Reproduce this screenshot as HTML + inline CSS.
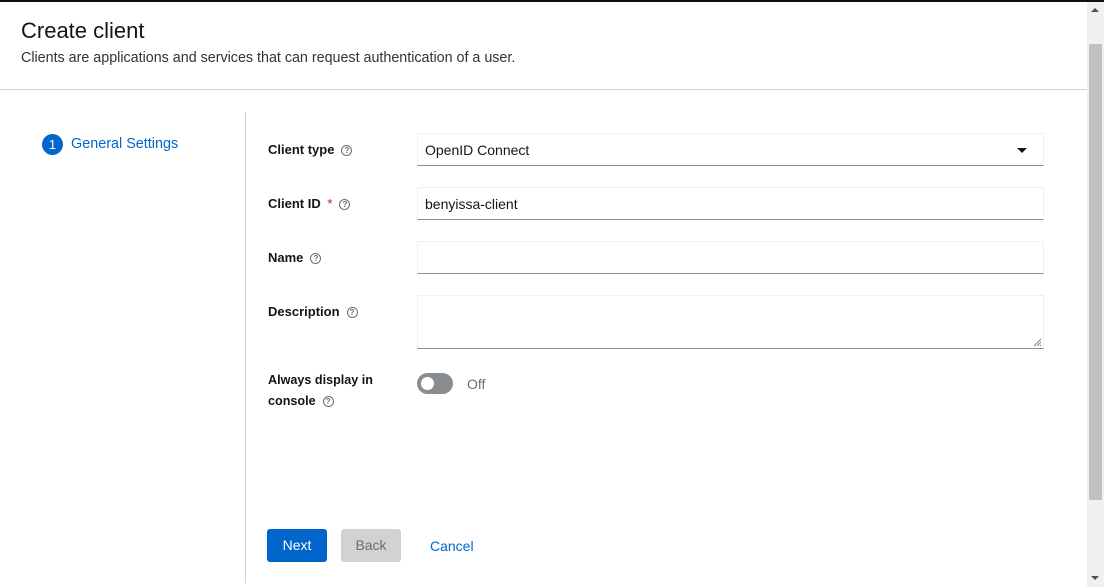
<!DOCTYPE html>
<html><head><style>
*{margin:0;padding:0;box-sizing:border-box}
body{width:1104px;height:587px;overflow:hidden;background:#fff;font-family:"Liberation Sans",sans-serif;position:relative;color:#151515}
.a{position:absolute}
.lbl{position:absolute;left:268px;font-size:13px;font-weight:bold;color:#151515}
.inp{position:absolute;left:417px;width:627px;border:1px solid #f0f0f0;border-bottom:1px solid #8a8d90;font-size:14px;padding-left:7px}
.h{display:inline-block;width:11px;height:11px;border:1.2px solid #6a6e73;border-radius:50%;font-size:8px;line-height:9px;text-align:center;color:#6a6e73;font-weight:bold;vertical-align:1px;margin-left:7px}
</style></head><body>
<div class="a" style="left:0;top:0;width:1104px;height:2px;background:#111"></div>
<div class="a" style="left:21px;top:18px;font-size:22px;">Create client</div>
<div class="a" style="left:21px;top:50px;font-size:14.3px;color:#333">Clients are applications and services that can request authentication of a user.</div>
<div class="a" style="left:0;top:89px;width:1087px;height:1px;background:#d2d2d2"></div>
<div class="a" style="left:245px;top:112px;width:1px;height:471px;background:#d2d2d2"></div>
<div class="a" style="left:42px;top:134px;width:21px;height:21px;border-radius:50%;background:#0066cc;color:#fff;font-size:13px;text-align:center;line-height:21px">1</div>
<div class="a" style="left:71px;top:136px;font-size:14.4px;color:#0066cc">General Settings</div>

<div class="lbl" style="top:142px">Client type<span class="h">?</span></div>
<div class="inp" style="top:133px;height:33px;line-height:32px">OpenID Connect<span class="a" style="right:16px;top:14px;width:0;height:0;border-left:5px solid transparent;border-right:5px solid transparent;border-top:5px solid #151515"></span></div>
<div class="lbl" style="top:196px">Client ID <span style="color:#c9190b;font-weight:normal;margin-left:3px">*</span><span class="h">?</span></div>
<div class="inp" style="top:187px;height:33px;line-height:32px">benyissa-client</div>
<div class="lbl" style="top:250px">Name<span class="h">?</span></div>
<div class="inp" style="top:241px;height:33px"></div>
<div class="lbl" style="top:304px">Description<span class="h">?</span></div>
<div class="inp" style="top:295px;height:54px"><svg class="a" style="right:1px;bottom:1px" width="9" height="9"><path d="M1 8L8 1M4 8L8 4M7 8L8 7" stroke="#888" stroke-width="1"/></svg></div>
<div class="lbl" style="top:370px;line-height:21px;font-size:12.6px">Always display in<br>console<span class="h">?</span></div>
<div class="a" style="left:417px;top:373px;width:36px;height:21px;border-radius:11px;background:#8a8d90"><div class="a" style="left:4px;top:4px;width:13px;height:13px;border-radius:50%;background:#fff"></div></div>
<div class="a" style="left:467px;top:376px;font-size:14px;color:#6a6e73">Off</div>

<div class="a" style="left:267px;top:529px;width:60px;height:33px;background:#0066cc;border-radius:3px;color:#fff;font-size:14px;text-align:center;line-height:33px">Next</div>
<div class="a" style="left:341px;top:529px;width:60px;height:33px;background:#d2d2d2;border-radius:3px;color:#6a6e73;font-size:14px;text-align:center;line-height:33px">Back</div>
<div class="a" style="left:430px;top:538px;font-size:14px;color:#0066cc">Cancel</div>

<div class="a" style="left:1087px;top:2px;width:17px;height:585px;background:#f0f0f0"></div>
<div class="a" style="left:1089px;top:44px;width:13px;height:456px;background:#c1c1c1"></div>
<div class="a" style="left:1091px;top:8px;border-left:4px solid transparent;border-right:4px solid transparent;border-bottom:4px solid #505050"></div>
<div class="a" style="left:1091px;top:576px;border-left:4px solid transparent;border-right:4px solid transparent;border-top:4px solid #505050"></div>
</body></html>
